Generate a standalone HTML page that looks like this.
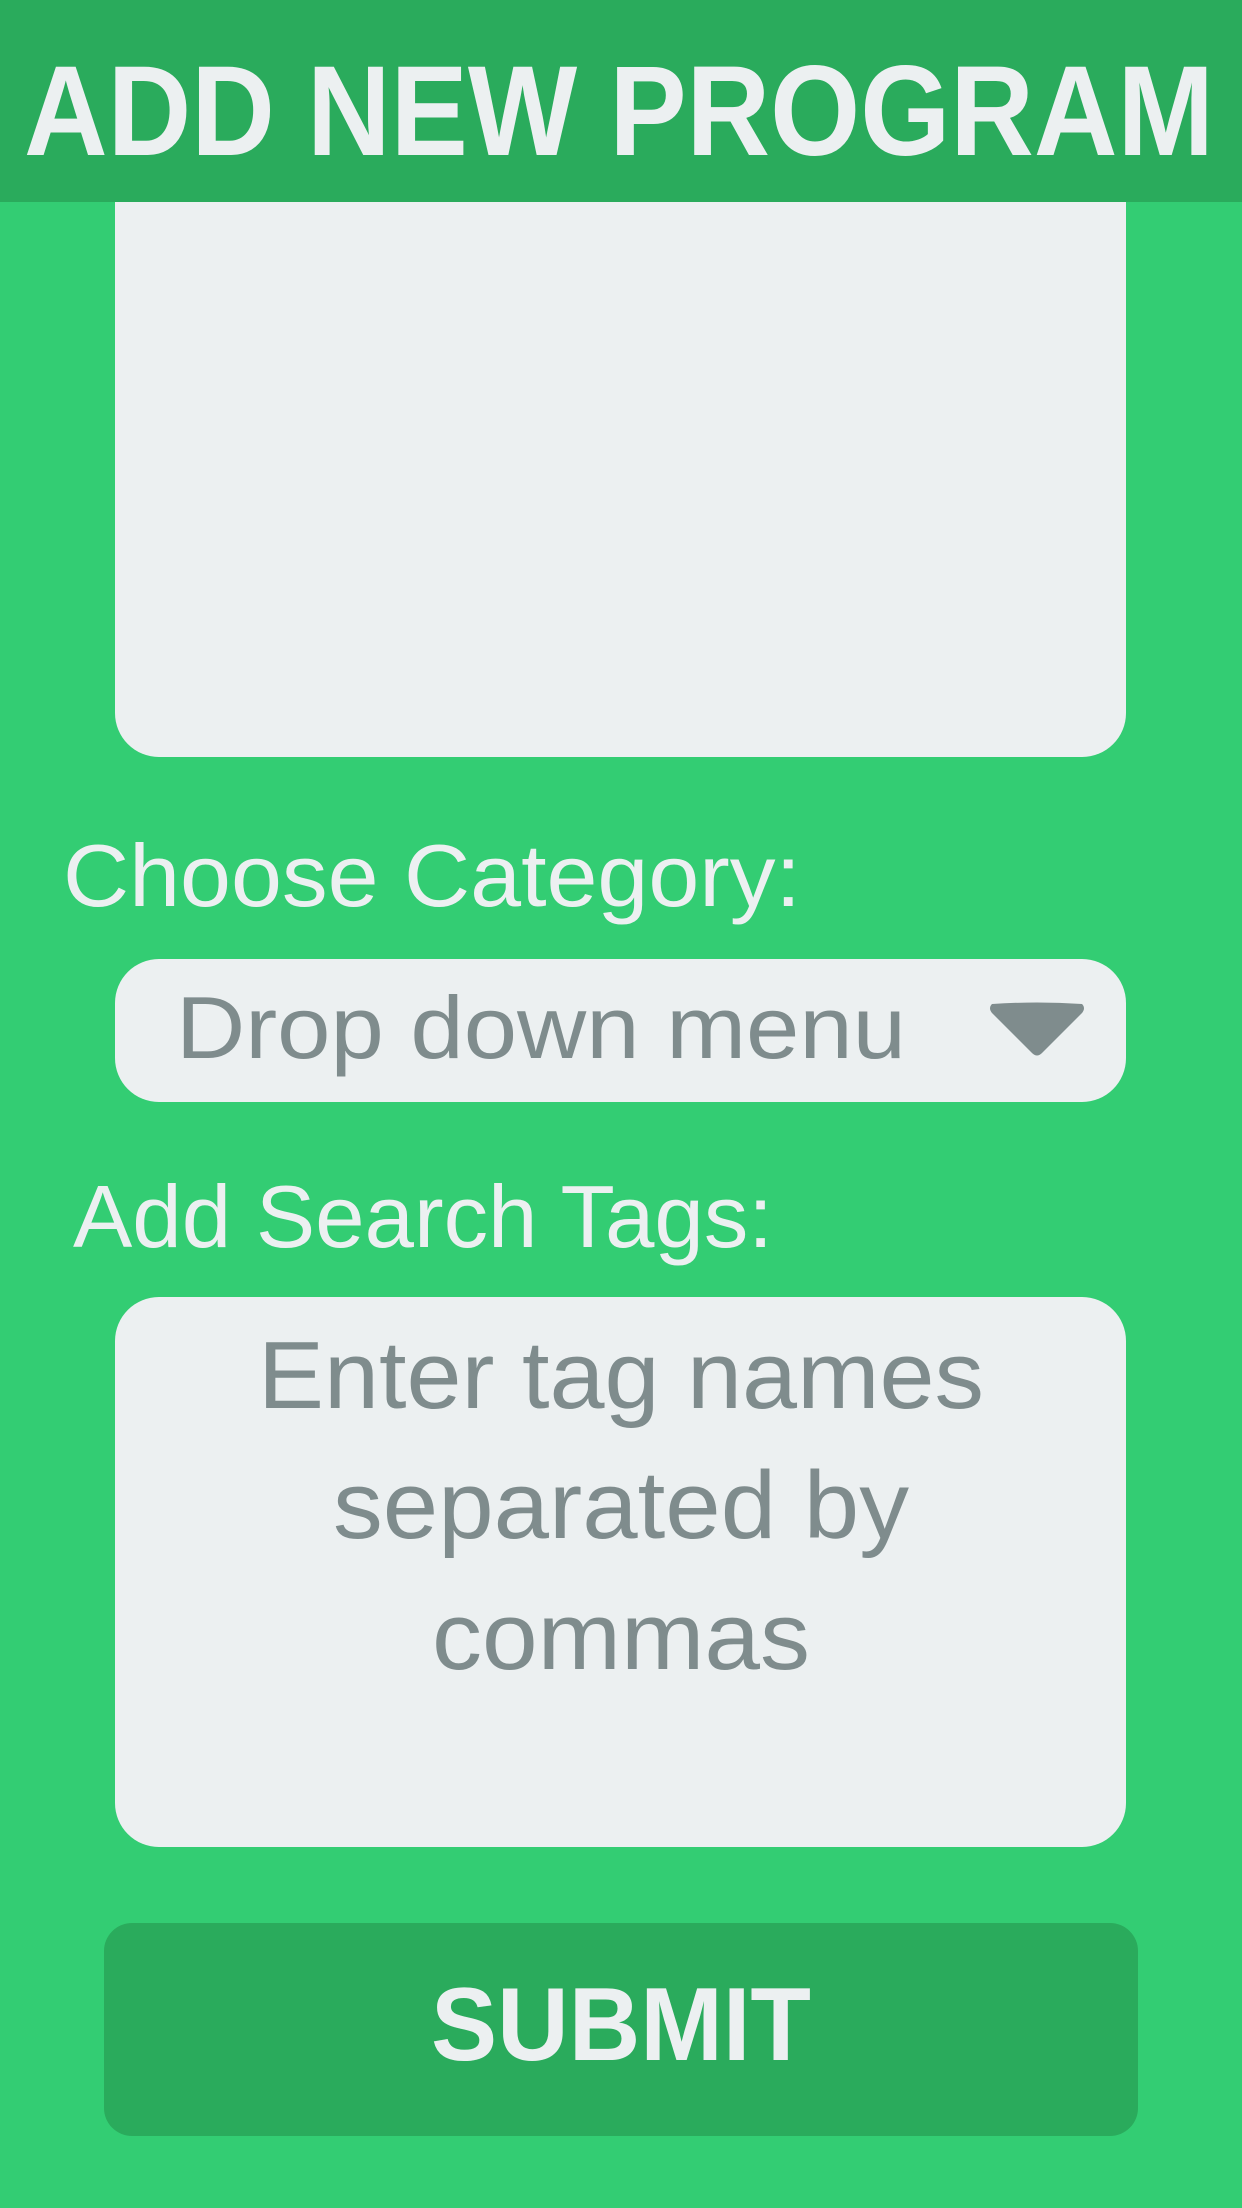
<!DOCTYPE html>
<html><head><meta charset="utf-8"><style>
html,body{margin:0;padding:0;}
body{width:1242px;height:2208px;background:#33cd73;position:relative;overflow:hidden;font-family:"Liberation Sans",sans-serif;}
.hdr{position:absolute;left:0;top:0;width:1242px;height:202px;background:#2aab5c;}
.box{position:absolute;background:#ecf0f1;border-radius:44px;}
.btn{position:absolute;left:104px;top:1923px;width:1034px;height:213px;background:#2aab5c;border-radius:28px;}
svg{position:absolute;left:0;top:0;}
</style></head><body>
<div class="box" style="left:115px;top:202px;width:1011px;height:555px;border-radius:0 0 44px 44px;"></div>
<div class="hdr"></div>
<div class="box" style="left:115px;top:959px;width:1011px;height:143px;"></div>
<div class="box" style="left:115px;top:1297px;width:1011px;height:550px;"></div>
<div class="btn"></div>
<svg width="1242" height="2208" viewBox="0 0 1242 2208">
<g font-family="Liberation Sans, sans-serif" fill="#ecf0f1">
<text x="24" y="155" font-size="128" font-weight="bold" textLength="1190" lengthAdjust="spacingAndGlyphs">ADD NEW PROGRAM</text>
<text x="63" y="906" font-size="88" textLength="738" lengthAdjust="spacingAndGlyphs">Choose Category:</text>
<text x="73" y="1247" font-size="88" textLength="700" lengthAdjust="spacingAndGlyphs">Add Search Tags:</text>
<text x="621" y="2060" font-size="104" font-weight="bold" text-anchor="middle" textLength="380" lengthAdjust="spacingAndGlyphs">SUBMIT</text>
</g>
<g font-family="Liberation Sans, sans-serif" fill="#7f8c8d">
<text x="176" y="1058" font-size="88" textLength="730" lengthAdjust="spacingAndGlyphs">Drop down menu</text>
<text x="621" y="1408" font-size="96" text-anchor="middle" textLength="726" lengthAdjust="spacingAndGlyphs">Enter tag names</text>
<text x="621" y="1538" font-size="96" text-anchor="middle" textLength="576" lengthAdjust="spacingAndGlyphs">separated by</text>
<text x="621" y="1669" font-size="96" text-anchor="middle" textLength="378" lengthAdjust="spacingAndGlyphs">commas</text>
<path d="M992 1004 Q1037 1001 1082 1004 Q1086 1008 1082 1013 L1042 1053 Q1037 1058 1032 1053 L992 1013 Q988 1008 992 1004 Z"/>
</g>
</svg>
</body></html>
